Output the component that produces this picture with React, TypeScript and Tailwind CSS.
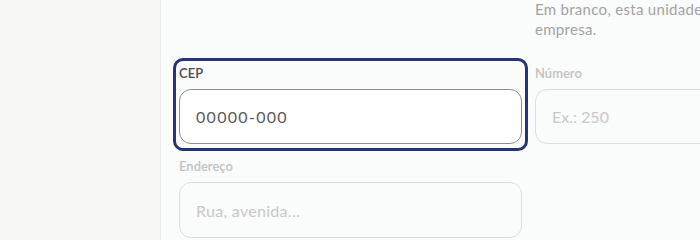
export default function App() {
  return (
    <div
      className="flex h-[240px] w-[700px] overflow-hidden bg-[#fafbfb]"
      style={{ fontFamily: "Lato, 'Noto Sans', sans-serif" }}
    >
      {/* Sidebar */}
      <aside className="h-full w-[161px] shrink-0 border-r border-[#ececec] bg-[#f7f7f6]" />

      {/* Form */}
      <main className="min-w-0 flex-1 pl-[18px]">
        <div className="grid grid-cols-[343px_343px] gap-x-[13px]">
          <div />
          <p className="-mt-px text-[15px] leading-5 tracking-[0.3px] text-[#a3a3a3] whitespace-nowrap">
            Em branco, esta unidade usará o endereço da
            <br />
            empresa.
          </p>
        </div>

        <div className="mt-[26px] grid grid-cols-[343px_343px] gap-x-[13px]">
          {/* Focused field */}
          <div className="-mx-[6px] -mt-[7px] -mb-[7px] rounded-[10px] border-[3px] border-[#26337a] pt-[4px] pb-[4px] pl-[3px] pr-[3px]">
            <label className="block text-[13px] leading-4 font-semibold text-[#4b4b4b]">
              CEP
            </label>
            <input
              className="mt-2 block h-[55px] w-full rounded-xl border border-[#8f8f8f] bg-white px-4 text-[16px] tracking-[1.3px] text-[#555] outline-none placeholder:text-[#5a5a5a]"
              placeholder="00000-000"
            />
          </div>

          <div>
            <label className="block text-[13px] leading-4 font-semibold text-[#c2c2c2]">
              Número
            </label>
            <input
              className="mt-2 block h-[55px] w-full rounded-xl border border-[#dedede] bg-transparent px-4 text-[16px] outline-none placeholder:text-[#c8c8c8]"
              placeholder="Ex.: 250"
            />
          </div>
        </div>

        <div className="mt-[14px] w-[343px]">
          <label className="block text-[13px] leading-4 font-semibold text-[#c2c2c2]">
            Endereço
          </label>
          <input
            className="mt-2 block h-[56px] w-full rounded-xl border border-[#dedede] bg-transparent px-4 text-[16px] tracking-[0.3px] outline-none placeholder:text-[#c8c8c8]"
            placeholder="Rua, avenida..."
          />
        </div>
      </main>
    </div>
  );
}
